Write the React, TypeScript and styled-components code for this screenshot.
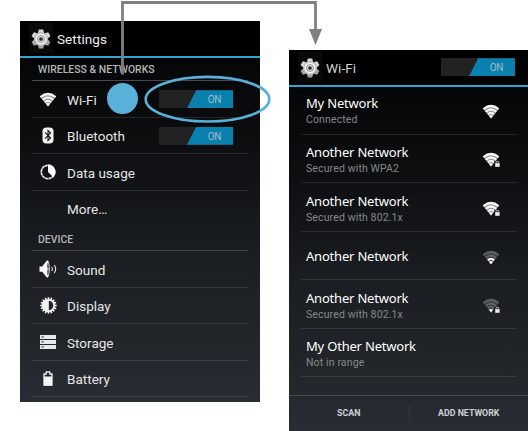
import React from "react";
import styled, { createGlobalStyle } from "styled-components";

const GlobalStyle = createGlobalStyle`
  html, body { margin: 0; padding: 0; background: #fff; }
  body { overflow: hidden; }
`;

const Stage = styled.main`
  position: relative;
  width: 528px;
  height: 431px;
  display: grid;
  grid-template-columns: 240px 239px;
  column-gap: 29px;
  padding-left: 20px;
  box-sizing: border-box;
  align-items: start;
  font-family: Roboto, sans-serif;
  color: #e6e6e6;
`;

const Phone = styled.section<{ $top: number }>`
  height: 381px;
  margin-top: ${(p) => p.$top}px;
  display: flex;
  flex-direction: column;
  background: linear-gradient(#000 0%, #060708 12%, #0b0d0f 30%, #1a1d21 60%, #22262a 84%, #282c35 100%);
`;

const TitleBar = styled.header`
  box-sizing: border-box;
  height: 36.5px;
  flex: none;
  display: flex;
  align-items: center;
  padding: 0 13px 0 9px;
  border-bottom: 2px solid #2da5d6;
  background: #000;
`;

const AppIcon = styled.span`
  width: 24px;
  height: 30px;
  display: flex;
  align-items: center;
  justify-content: center;
  background: #090909;
`;

const Title = styled.h1<{ $color: string }>`
  margin: 2px auto 0 4px;
  font-size: 13.5px;
  line-height: 18px;
  font-weight: 400;
  letter-spacing: 0.1px;
  color: ${(p) => p.$color};
`;

const SectionTitle = styled.h2<{ $height: number; $pad: number }>`
  box-sizing: border-box;
  height: ${(p) => p.$height}px;
  flex: none;
  margin: 0 12px;
  padding: ${(p) => p.$pad}px 0 0 6px;
  border-bottom: 1px solid #46494b;
  font-size: 10.4px;
  line-height: 14px;
  font-weight: 500;
  letter-spacing: 0.04px;
  color: #b4b6b7;
  white-space: nowrap;
`;

const SettingRow = styled.div<{ $plain?: boolean }>`
  box-sizing: border-box;
  height: 36.5px;
  flex: none;
  display: grid;
  grid-template-columns: 34px 1fr auto;
  align-items: center;
  margin: 0 12px;
  padding: 1px 15px 0 0;
  border-bottom: 1px solid ${(p) => (p.$plain ? "transparent" : "rgba(255, 255, 255, 0.11)")};
`;

const IconSlot = styled.span`
  display: flex;
  justify-content: center;
  width: 20px;
  margin-left: 6px;
`;

const Label = styled.span`
  padding: 1px 0 0 1px;
  font-size: 13.5px;
  line-height: 18px;
  letter-spacing: 0.02px;
  white-space: nowrap;
`;

const Track = styled.span`
  width: 74px;
  height: 18px;
  display: flex;
  justify-content: flex-end;
  background: #222;
`;

const Thumb = styled.span`
  width: 46px;
  box-sizing: border-box;
  padding-left: 9px;
  clip-path: polygon(20% 0, 100% 0, 100% 100%, 0 100%);
  background: #0a80ae;
  color: #a3bdc9;
  font-size: 10px;
  line-height: 20px;
  letter-spacing: -0.2px;
  text-align: center;
`;

const NetworkRow = styled.div<{ $height: number; $pad: number }>`
  box-sizing: border-box;
  height: ${(p) => p.$height}px;
  flex: none;
  display: flex;
  justify-content: space-between;
  margin: 0 11px 0 12px;
  padding: ${(p) => p.$pad}px 17px 0 5px;
  border-bottom: 1px solid rgba(255, 255, 255, 0.1);
`;

const NetworkName = styled.div`
  font: 400 13px/18px "Noto Sans", sans-serif;
  letter-spacing: -0.2px;
  color: #fff;
  white-space: nowrap;
`;

const NetworkStatus = styled.div`
  margin-top: 1px;
  font-size: 10.5px;
  line-height: 14px;
  letter-spacing: 0.13px;
  color: #85888a;
  white-space: nowrap;
`;

const SignalSlot = styled.span<{ $top: number }>`
  flex: none;
  margin-top: ${(p) => p.$top}px;
`;

const Actions = styled.footer`
  margin-top: auto;
  box-sizing: border-box;
  height: 36px;
  flex: none;
  display: grid;
  grid-template-columns: 1fr 1fr;
  align-items: center;
  border-top: 1px solid #474c4f;
`;

const Action = styled.span`
  height: 18px;
  box-sizing: border-box;
  text-align: center;
  font-size: 8.8px;
  line-height: 17px;
  font-weight: 700;
  color: #d0d2d4;
  & + & { border-left: 1px solid #33373e; }
`;

const Overlay = styled.svg`
  position: absolute;
  inset: 0;
  pointer-events: none;
`;

const Svg = styled.svg`
  display: block;
  overflow: visible;
`;

function Gear() {
  return (
    <Svg width="20" height="20" viewBox="-10 -11 20 20">
      {[0, 60, 120, 180, 240, 300].map((a) => (
        <path
          key={a}
          d="M-3.2-5.5-2.2-9.6H2.2L3.2-5.5Z"
          fill={a >= 120 && a <= 240 ? "#a4a4a4" : "#d8d8d8"}
          transform={`rotate(${a})`}
        />
      ))}
      <circle r="7" fill="#b9b9b9" />
      <circle r="4.7" fill="#8a8a8a" stroke="#f4f4f4" strokeWidth="1.8" />
      <circle r="2.4" fill="#2c2c2c" stroke="#dcdcdc" strokeWidth="1.1" />
    </Svg>
  );
}

function Wifi({ level = 4, locked = false }: { level?: number; locked?: boolean }) {
  const shade = (n: number) => (level >= n ? "#f5f5f5" : "#5c5f62");
  return (
    <Svg width="18" height="15" viewBox="0 0 18 15">
      <path d="M.8 4.4Q9-2.6 17.2 4.4L9 14.4Z" fill={level === 4 ? "#8c8e8f" : "#34373a"} />
      <g fill="none" strokeWidth="2.2">
        <path d="M1.5 5.1Q9-1.1 16.5 5.1" stroke={shade(4)} />
        <path d="M3.7 7.8Q9 3.2 14.3 7.8" stroke={shade(3)} />
        <path d="M5.8 10.3Q9 7.5 12.2 10.3" stroke={shade(2)} />
      </g>
      <path d="M6.8 11.8Q9 10.1 11.2 11.8L9 14.5Z" fill={shade(level < 4 ? 1 : 4)} />
      {locked && (
        <g>
          <rect x="12.4" y="9" width="5.6" height="6" fill="#17191b" />
          <path d="M14.1 11.5v-1q0-1.3 1.3-1.3t1.3 1.3v1" stroke="#ddd" fill="none" strokeWidth=".9" />
          <rect x="13.2" y="11.2" width="4.4" height="3.6" fill="#eee" />
        </g>
      )}
    </Svg>
  );
}

function Bluetooth() {
  return (
    <Svg width="12" height="17" viewBox="0 0 12 17">
      <rect x=".5" y=".5" width="11" height="16" rx="4" fill="#f4f4f4" />
      <path d="M3 5.3 8.6 11 6 13.5v-10L8.6 6 3 11.7" fill="none" stroke="#15181a" strokeWidth="1.1" />
    </Svg>
  );
}

function DataUsage() {
  return (
    <Svg width="16" height="16" viewBox="0 0 16 16">
      <circle cx="8" cy="8" r="6.7" fill="none" stroke="#e6e6e6" strokeWidth="1.7" strokeDasharray="3.1 .4" />
      <path d="M8 .4A7.6 7.6 0 0 1 13.3 13.3L8 8Z" fill="#fff" />
    </Svg>
  );
}

function Sound() {
  return (
    <Svg width="18" height="18" viewBox="0 0 18 18">
      <path d="M.5 6.4H3.2L7.6.8H9V17.2H7.6L3.2 11.8H.5Z" fill="#f8f8f8" />
      <ellipse cx="8.6" cy="9" rx="2.1" ry="8.4" fill="#f8f8f8" />
      <ellipse cx="9" cy="9" rx="1" ry="6.4" fill="#55585b" />
      <path d="M8.4 7Q10.6 9 8.4 11" fill="#f8f8f8" />
      <path d="M12.7 7Q14.2 9 12.7 11M15.3 5Q18 9 15.3 13" stroke="#ddd" fill="none" strokeWidth="1.2" />
    </Svg>
  );
}

function Display() {
  return (
    <Svg width="17" height="17" viewBox="-8.5 -8.5 17 17">
      {Array.from({ length: 16 }, (_, i) => (
        <path key={i} d="M-1-6H1L.7-8.3H-.7Z" fill="#eee" transform={`rotate(${i * 22.5})`} />
      ))}
      <circle r="5.7" fill="#202427" stroke="#f4f4f4" strokeWidth="1.8" />
      <path d="M.3-5.5H0A5.5 5.5 0 0 0 0 5.5H.3Z" fill="#f4f4f4" />
    </Svg>
  );
}

function Storage() {
  return (
    <Svg width="16" height="14" viewBox="0 0 16 14">
      {[0, 5, 10].map((y) => (
        <g key={y}>
          <rect y={y} width="16" height="4" fill="#e8e8e8" />
          <rect x="1.3" y={y + 1.2} width="2.6" height="1.3" fill="#666" />
        </g>
      ))}
    </Svg>
  );
}

function Battery() {
  return (
    <Svg width="10" height="15" viewBox="0 0 10 15">
      <path d="M1 14.2V3H3.2V1H6.8V3H9V14.2Z" fill="#202429" stroke="#eee" strokeWidth="1.3" />
      <rect x="1" y="5.5" width="8" height="9" fill="#f5f5f5" />
    </Svg>
  );
}

function Switch() {
  return (
    <Track>
      <Thumb>ON</Thumb>
    </Track>
  );
}

interface SettingProps {
  icon?: React.ReactNode;
  label: string;
  on?: boolean;
  plain?: boolean;
}

function Setting({ icon, label, on, plain }: SettingProps) {
  return (
    <SettingRow $plain={plain}>
      <IconSlot>{icon}</IconSlot>
      <Label>{label}</Label>
      {on && <Switch />}
    </SettingRow>
  );
}

const networks = [
  { name: "My Network", status: "Connected", height: 48.5, pad: 7, level: 4, signalTop: 10 },
  { name: "Another Network", status: "Secured with WPA2", height: 48, pad: 8, level: 4, locked: true, signalTop: 9 },
  { name: "Another Network", status: "Secured with 802.1x", height: 49, pad: 9, level: 4, locked: true, signalTop: 9 },
  { name: "Another Network", height: 48, pad: 15, level: 2, signalTop: 3 },
  { name: "Another Network", status: "Secured with 802.1x", height: 49, pad: 9, level: 1, locked: true, signalTop: 9 },
  { name: "My Other Network", status: "Not in range", height: 48, pad: 8, signalTop: 0 },
];

export default function App() {
  return (
    <>
      <GlobalStyle />
      <Stage>
        <Phone $top={21}>
          <TitleBar>
            <AppIcon><Gear /></AppIcon>
            <Title $color="#eee">Settings</Title>
          </TitleBar>
          <SectionTitle $height={23.5} $pad={5}>WIRELESS &amp; NETWORKS</SectionTitle>
          <Setting icon={<Wifi />} label="Wi-Fi" on />
          <Setting icon={<Bluetooth />} label="Bluetooth" on />
          <Setting icon={<DataUsage />} label="Data usage" />
          <Setting label="More…" plain />
          <SectionTitle $height={24} $pad={6}>DEVICE</SectionTitle>
          <Setting icon={<Sound />} label="Sound" />
          <Setting icon={<Display />} label="Display" />
          <Setting icon={<Storage />} label="Storage" />
          <Setting icon={<Battery />} label="Battery" />
        </Phone>
        <Phone $top={50}>
          <TitleBar>
            <AppIcon><Gear /></AppIcon>
            <Title $color="#d2d2d2">Wi-Fi</Title>
            <Switch />
          </TitleBar>
          {networks.map((n, i) => (
            <NetworkRow key={i} $height={n.height} $pad={n.pad}>
              <div>
                <NetworkName>{n.name}</NetworkName>
                {n.status && <NetworkStatus>{n.status}</NetworkStatus>}
              </div>
              {n.level && (
                <SignalSlot $top={n.signalTop}>
                  <Wifi level={n.level} locked={n.locked} />
                </SignalSlot>
              )}
            </NetworkRow>
          ))}
          <Actions>
            <Action>SCAN</Action>
            <Action>ADD NETWORK</Action>
          </Actions>
        </Phone>
        <Overlay width="528" height="431" viewBox="0 0 528 431">
          <path d="M122.5 74.5V2.5H315.5V31" fill="none" stroke="#808080" strokeWidth="2.8" />
          <path d="M309 29H322L315.5 45Z" fill="#808080" />
          <circle cx="122.5" cy="98.5" r="15.5" fill="#59b1da" />
          <ellipse cx="207.5" cy="99.2" rx="61.8" ry="22.3" fill="none" stroke="#59b1da" strokeWidth="2.6" />
        </Overlay>
      </Stage>
    </>
  );
}
